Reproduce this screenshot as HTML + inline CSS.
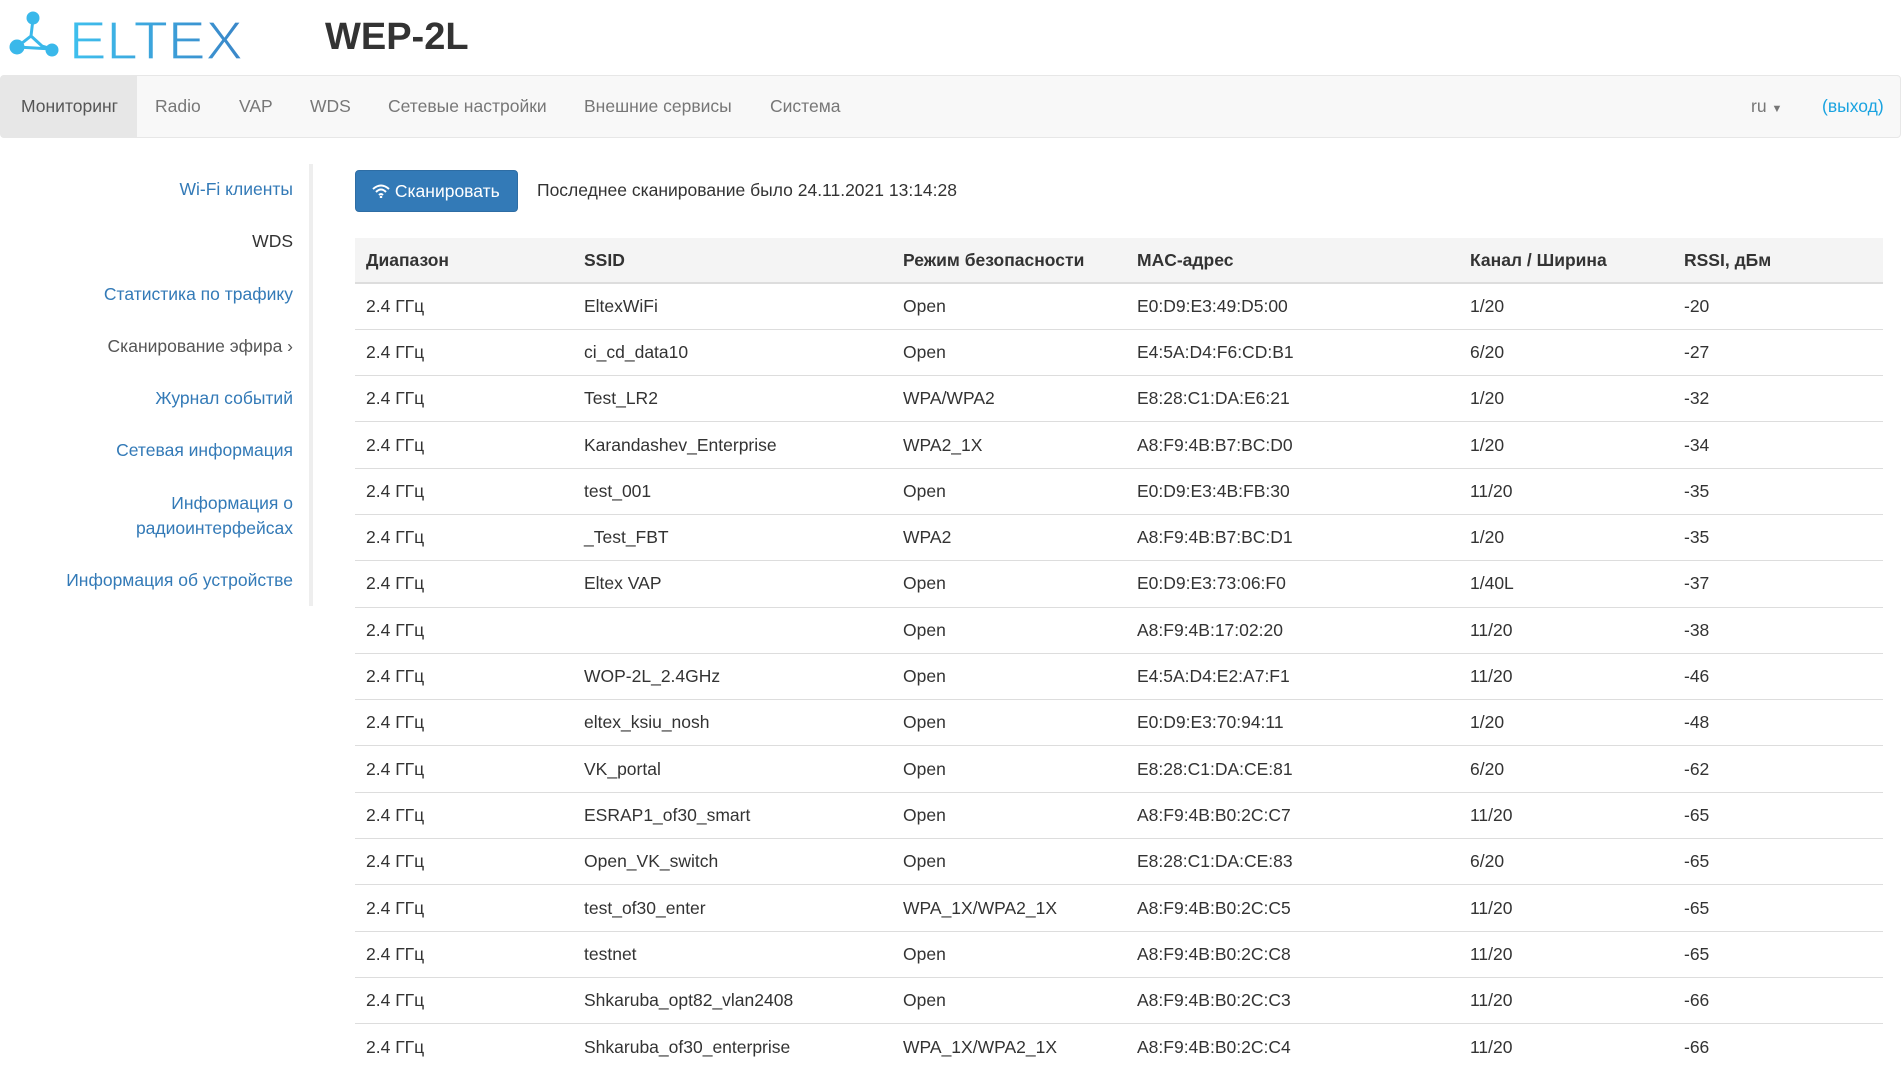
<!DOCTYPE html>
<html><head><meta charset="utf-8"><style>
*{box-sizing:border-box;margin:0;padding:0}
body{width:1901px;height:1072px;overflow:hidden;background:#fff;font-family:"Liberation Sans",Arial,sans-serif;color:#333;font-size:17.5px}
.hdr{position:absolute;left:0;top:0;width:1901px;height:75px}
.title{position:absolute;left:325px;top:16px;font-size:38px;font-weight:bold;color:#333}
.nav{position:absolute;left:0;top:75px;width:1901px;height:63px;background:#f8f8f8;border:1px solid #e7e7e7;border-radius:4px}
.nav span{position:absolute;top:20px;color:#777;font-size:17.5px}
.nav .act{position:absolute;left:0;top:0;width:136px;height:61px;background:#e7e7e7}
.side{position:absolute;left:0;top:164px;width:313px;height:442px;border-right:4px solid #eee}
.side div{position:absolute;right:16px;text-align:right;color:#337ab7;font-size:17.5px;line-height:25px}
.btn{position:absolute;left:355px;top:170px;width:163px;height:42px;background:#337ab7;border:1px solid #2e6da4;border-radius:4px;color:#fff;font-size:17.5px;line-height:40px;padding-left:16px}
.last{position:absolute;left:537px;top:180px}
table{position:absolute;left:355px;top:238px;width:1528px;border-collapse:collapse}
th{background:#f4f4f4;height:45px;text-align:left;font-weight:bold;padding-left:11px;border-bottom:2px solid #ddd}
td{height:46.3px;padding-left:11px;border-top:1px solid #ddd}
</style></head><body>
<div class="hdr">
<svg width="260" height="75" style="position:absolute;left:0;top:0">
<defs><linearGradient id="g" x1="0" x2="1"><stop offset="0" stop-color="#3ec0ee"/><stop offset="1" stop-color="#3a86c8"/></linearGradient></defs>
<path d="M33 19 L31 36 M31 36 L17 47 M31 36 L42 46 L52 49 M17 47 L52 49" stroke="#3ab8ea" stroke-width="3" fill="none"/>
<circle cx="33" cy="18" r="6.5" fill="#3ab8ea"/><circle cx="17" cy="47" r="7.5" fill="#3ab8ea"/><circle cx="52" cy="50" r="6.5" fill="#3ab8ea"/>
<text x="69" y="59" font-family="Liberation Sans" font-size="54" fill="url(#g)" stroke="#fff" stroke-width="1.2" textLength="174" lengthAdjust="spacingAndGlyphs">ELTEX</text>
</svg>
<div class="title">WEP-2L</div>
</div>
<div class="nav"><div class="act"></div>
<span style="left:20px;color:#555">Мониторинг</span><span style="left:154px">Radio</span><span style="left:238px">VAP</span><span style="left:309px">WDS</span><span style="left:387px">Сетевые настройки</span><span style="left:583px">Внешние сервисы</span><span style="left:769px">Система</span>
<span style="left:1750px">ru <small style="font-size:11px">▼</small></span><span style="left:1821px;color:#1aa3e0">(выход)</span></div>
<div class="side">
<div style="top:13px">Wi-Fi клиенты</div>
<div style="top:65px;color:#333">WDS</div>
<div style="top:118px">Статистика по трафику</div>
<div style="top:170px;color:#555">Сканирование эфира ›</div>
<div style="top:222px">Журнал событий</div>
<div style="top:274px">Сетевая информация</div>
<div style="top:327px">Информация о<br>радиоинтерфейсах</div>
<div style="top:404px">Информация об устройстве</div>
</div>
<div class="btn">
<svg width="18" height="14" viewBox="0 0 18 14" style="vertical-align:-1px"><path d="M1 5 Q9 -2 17 5 M4 8 Q9 3 14 8 M7 11 Q9 9 11 11" stroke="#fff" stroke-width="2" fill="none"/><circle cx="9" cy="13" r="1.3" fill="#fff"/></svg> Сканировать</div>
<div class="last">Последнее сканирование было 24.11.2021 13:14:28</div>
<table>
<colgroup><col style="width:218px"><col style="width:319px"><col style="width:234px"><col style="width:333px"><col style="width:214px"><col></colgroup>
<tr><th>Диапазон</th><th>SSID</th><th>Режим безопасности</th><th>MAC-адрес</th><th>Канал / Ширина</th><th>RSSI, дБм</th></tr>
<tr><td>2.4 ГГц</td><td>EltexWiFi</td><td>Open</td><td>E0:D9:E3:49:D5:00</td><td>1/20</td><td>-20</td></tr>
<tr><td>2.4 ГГц</td><td>ci_cd_data10</td><td>Open</td><td>E4:5A:D4:F6:CD:B1</td><td>6/20</td><td>-27</td></tr>
<tr><td>2.4 ГГц</td><td>Test_LR2</td><td>WPA/WPA2</td><td>E8:28:C1:DA:E6:21</td><td>1/20</td><td>-32</td></tr>
<tr><td>2.4 ГГц</td><td>Karandashev_Enterprise</td><td>WPA2_1X</td><td>A8:F9:4B:B7:BC:D0</td><td>1/20</td><td>-34</td></tr>
<tr><td>2.4 ГГц</td><td>test_001</td><td>Open</td><td>E0:D9:E3:4B:FB:30</td><td>11/20</td><td>-35</td></tr>
<tr><td>2.4 ГГц</td><td>_Test_FBT</td><td>WPA2</td><td>A8:F9:4B:B7:BC:D1</td><td>1/20</td><td>-35</td></tr>
<tr><td>2.4 ГГц</td><td>Eltex VAP</td><td>Open</td><td>E0:D9:E3:73:06:F0</td><td>1/40L</td><td>-37</td></tr>
<tr><td>2.4 ГГц</td><td></td><td>Open</td><td>A8:F9:4B:17:02:20</td><td>11/20</td><td>-38</td></tr>
<tr><td>2.4 ГГц</td><td>WOP-2L_2.4GHz</td><td>Open</td><td>E4:5A:D4:E2:A7:F1</td><td>11/20</td><td>-46</td></tr>
<tr><td>2.4 ГГц</td><td>eltex_ksiu_nosh</td><td>Open</td><td>E0:D9:E3:70:94:11</td><td>1/20</td><td>-48</td></tr>
<tr><td>2.4 ГГц</td><td>VK_portal</td><td>Open</td><td>E8:28:C1:DA:CE:81</td><td>6/20</td><td>-62</td></tr>
<tr><td>2.4 ГГц</td><td>ESRAP1_of30_smart</td><td>Open</td><td>A8:F9:4B:B0:2C:C7</td><td>11/20</td><td>-65</td></tr>
<tr><td>2.4 ГГц</td><td>Open_VK_switch</td><td>Open</td><td>E8:28:C1:DA:CE:83</td><td>6/20</td><td>-65</td></tr>
<tr><td>2.4 ГГц</td><td>test_of30_enter</td><td>WPA_1X/WPA2_1X</td><td>A8:F9:4B:B0:2C:C5</td><td>11/20</td><td>-65</td></tr>
<tr><td>2.4 ГГц</td><td>testnet</td><td>Open</td><td>A8:F9:4B:B0:2C:C8</td><td>11/20</td><td>-65</td></tr>
<tr><td>2.4 ГГц</td><td>Shkaruba_opt82_vlan2408</td><td>Open</td><td>A8:F9:4B:B0:2C:C3</td><td>11/20</td><td>-66</td></tr>
<tr><td>2.4 ГГц</td><td>Shkaruba_of30_enterprise</td><td>WPA_1X/WPA2_1X</td><td>A8:F9:4B:B0:2C:C4</td><td>11/20</td><td>-66</td></tr>
</table>
</body></html>
